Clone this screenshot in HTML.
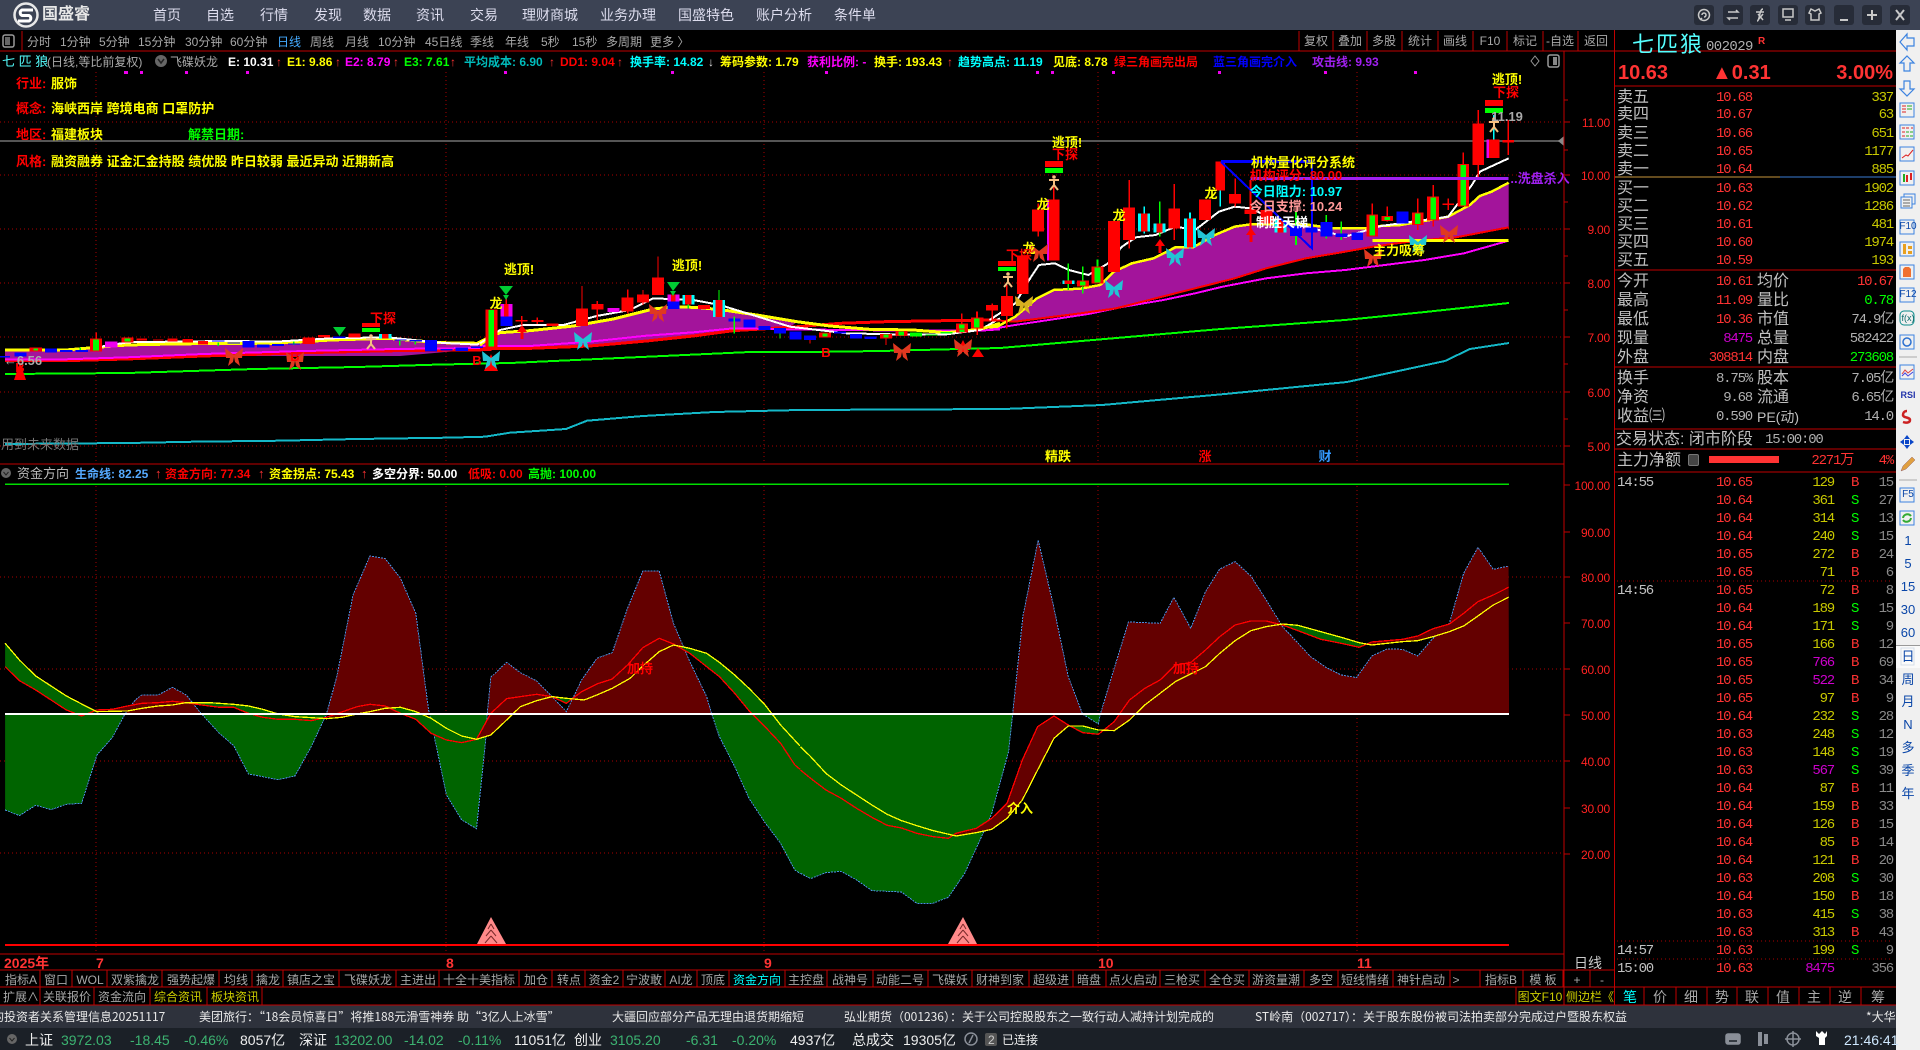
<!DOCTYPE html>
<html lang="zh"><head><meta charset="utf-8"><title>国盛睿</title>
<style>
html,body{margin:0;padding:0;background:#000;width:1920px;height:1050px;overflow:hidden}
body{position:relative;font-family:"Liberation Sans","WenQuanYi Zen Hei","Noto Sans CJK SC",sans-serif;font-size:13px;color:#c0c0c0}
.t{position:absolute;white-space:pre;line-height:16px;margin-top:1px}
.h{font-size:12px}
.b{font-weight:bold}
svg{position:absolute;left:0;top:0}
svg *{vector-effect:non-scaling-stroke}
svg text{font-family:"Liberation Sans","WenQuanYi Zen Hei","Noto Sans CJK SC",sans-serif}
.box{position:absolute}
#nav span{position:absolute;top:7px;font-size:14px;line-height:16px;color:#dde;transform:translateX(-50%);white-space:pre}
#tb span{position:absolute;top:34px;font-size:12px;line-height:16px;color:#a8a8a8;white-space:pre}
#tr span{position:absolute;top:33px;font-size:12px;line-height:16px;color:#a8a8a8;transform:translateX(-50%);white-space:pre}
#info span{position:absolute;top:54px;font-size:12px;line-height:16px;font-weight:bold;white-space:pre}
#ax span{position:absolute;left:1566px;width:44px;margin-top:1px;text-align:right;line-height:14px;font-size:12px;letter-spacing:-.2px;color:#f22}
#tabs span,#tab2 span,#tab3 span{position:absolute;transform:translateX(-50%);line-height:16px;white-space:pre;color:#a8a8a8;font-size:12px}
#tabs span{top:972px}#tab2 span{top:989px}#tab3 span{top:989px;font-size:14px}
#st span{position:absolute;top:1032px;line-height:16px;font-size:14px;white-space:pre;color:#eee}
#st .g{color:#3cb371}
#tk span{position:absolute;top:1009px;line-height:16px;color:#e8e8e8;white-space:pre;font-size:12px;font-family:"WenQuanYi Zen Hei","Noto Sans CJK SC",sans-serif}
.r{position:absolute;left:1617px;width:276px;height:18px;line-height:18px;margin-top:1px;font-family:"Liberation Mono","WenQuanYi Zen Hei",monospace;font-size:14px;letter-spacing:-1.2px;white-space:pre}
.r i,.r b,.r u,.r s,.r em,.r q{position:absolute;top:0;font-style:normal;font-weight:normal;text-decoration:none;quotes:none}
.r i{left:0;color:#c0c0c0;font-size:14px}
.r b{right:141px;color:#f33}
.r u{right:59px;color:#c8c800}
.r u.m{color:#c0c}
.r s{left:234px;color:#f33}
.r s.g{color:#0f0}
.r em{right:0;color:#8a8a8a}
.l{position:absolute;left:1617px;margin-top:1px;line-height:18px;font-size:16px;color:#c0c0c0;white-space:pre}
.l2{position:absolute;left:1757px;margin-top:1px;line-height:18px;font-size:16px;color:#c0c0c0;white-space:pre}
.v{position:absolute;right:168px;margin-top:1px;line-height:18px;font-family:"Liberation Mono",monospace;font-size:14px;letter-spacing:-1.2px;color:#f33;white-space:pre}
.v2{position:absolute;right:27px;margin-top:1px;line-height:18px;font-family:"Liberation Mono","WenQuanYi Zen Hei",monospace;font-size:14px;letter-spacing:-1.2px;color:#c8c800;white-space:pre}
#sb span{position:absolute;left:1896px;width:24px;text-align:center;line-height:16px;color:#0a46a8;font-size:13px}
</style></head><body>

<!-- backgrounds -->
<div class="box" style="left:0;top:0;width:1920px;height:30px;background:#3c4354"></div>
<div class="box" style="left:1896px;top:30px;width:24px;height:1020px;background:#f0f0f0"></div>
<div class="box" style="left:0;top:1005px;width:1896px;height:23px;background:#2e323c"></div>
<div class="box" style="left:0;top:1028px;width:1896px;height:22px;background:#1b2027"></div>
<div class="box" style="left:1896px;top:645px;width:24px;height:23px;background:#fafafa;border-top:1px solid #999;box-sizing:border-box"></div>

<svg width="1920" height="1050" viewBox="0 0 1920 1050" fill="none">
<defs>
<clipPath id="up"><rect x="0" y="480" width="1564" height="234"/></clipPath>
<clipPath id="dn"><rect x="0" y="714" width="1564" height="240"/></clipPath>
<g id="area">
<polygon transform="translate(0,480) scale(.5102,.3333)" points="10,702 10,990 38,1007 70,976 100,989 130,973 160,970 190,825 220,773 245,702 265,660 278,645 310,645 338,622 365,645 395,702 430,760 458,797 487,882 545,899 578,888 610,800 640,702 660,590 692,345 725,228 755,236 785,295 815,400 840,690 842,702 875,945 905,1020 934,1046 952,780 955,702 962,592 993,547 1020,578 1052,603 1082,650 1110,695 1140,600 1170,535 1200,518 1230,385 1260,273 1292,273 1320,430 1352,545 1385,650 1395,702 1410,770 1440,860 1468,955 1498,1025 1530,1090 1558,1170 1568,1180 1568,702"/>
<polygon transform="translate(780,480) scale(.5102,.3333)" points="0,702 0,1090 28,1170 60,1196 90,1178 120,1174 150,1200 180,1232 238,1236 268,1270 300,1270 330,1252 362,1180 398,1060 415,1000 448,815 456,702 476,410 506,180 535,370 565,590 593,702 624,732 628,702 655,565 683,426 745,430 772,352 805,445 834,335 862,267 892,245 923,288 953,360 985,440 1040,530 1070,562 1100,585 1130,593 1160,528 1190,507 1220,508 1250,528 1280,475 1312,430 1340,280 1368,202 1398,268 1428,258 1429,702"/>
</g>
<path id="bf" d="M0 -2L-9 -9L-8 1L-4 1L-6 9L-1 5L0 0L1 5L6 9L4 1L8 1L9 -9Z"/>
<g id="pp"><circle cx="0" cy="-6" r="1.8" fill="#f5c080"/><path d="M-5 -3L5 -3M0 -4L0 2M0 2L-4 7M0 2L4 7" stroke="#f5c080" stroke-width="2"/></g>
<g id="ar"><path d="M0 -7L5 0L1.5 0L1.5 7L-1.5 7L-1.5 0L-5 0Z" fill="#f00"/></g>
</defs>

<!-- grid -->
<g stroke="#a00" stroke-width="1" stroke-dasharray="1 3" shape-rendering="crispEdges">
<path d="M0 122H1564M0 175H1564M0 229H1564M0 283H1564M0 337H1564M0 392H1564M0 446H1564"/>
<path d="M0 577H1564M0 669H1564M0 761H1564M0 853H1564"/>
<path d="M96 72V462M446 72V462M764 72V462M1098 72V462M1357 72V462"/>
<path d="M96 486V952M446 486V952M764 486V952M1098 486V952M1357 486V952"/>
<path d="M1617 581H1893M1617 941H1893M1617 959H1893"/>
</g>
<path d="M0 141H1562" stroke="#555" stroke-width="2" shape-rendering="crispEdges"/>
<polygon points="1558,141 1564,136 1564,146" fill="#888"/>

<!-- pink dots -->
<g fill="#e0e" shape-rendering="crispEdges"><path d="M124 71h4v3h-4zM140 71h3v3h-3zM185 71h3v3h-3zM246 71h3v3h-3zM504 71h3v3h-3zM671 71h3v3h-3zM825 71h3v3h-3zM1036 71h3v3h-3zM1051 71h3v3h-3zM1112 71h3v3h-3zM1218 71h3v3h-3zM1324 71h3v3h-3zM1414 71h3v3h-3z"/></g>

<!-- purple bands -->
<g fill="#a3149b">
<polygon points="5,350 66,350 97,347 128,345 173,344 230,343 275,343 332,340 388,338 439,343 477,343 490,337 500,333 530,331 573,326 613,319 653,309 677,307 700,308 723,310 757,315 797,322 790,327 733,331 693,336 647,341 590,346 530,348 480,349 400,356 204,356 128,359 66,360 5,360"/>
<polygon transform="translate(950,90) scale(.3954,.3333)" points="150,690 165,680 220,625 262,600 330,596 380,585 415,545 460,520 515,505 570,472 615,472 670,435 720,410 760,403 900,403 965,415 1050,415 1090,408 1140,405 1190,395 1260,380 1315,345 1340,318 1370,305 1413,278 1413,412 1280,442 1200,450 1130,460 1070,470 1000,485 900,505 800,535 720,565 620,595 520,625 420,655 330,670 250,682 165,695"/>
</g>

<!-- long MAs -->
<g fill="none" shape-rendering="crispEdges">
<polyline stroke="#0f0" stroke-width="2" points="5,374 127,373 255,369 357,367 434,364.7 510,363 663,356 750,352 813,352 880,351 960,349 1000,348 1221,329 1345,320 1425,312 1509,303"/>
<polyline stroke="#14b8c8" stroke-width="2" points="5,444 128,443 194,441.7 280,440.7 357,439 446,437.7 485,436.7 510,432.7 566,429 587,420.7 643,416 714,412 800,410 1004,409 1102,405 1225,394 1347,382 1445,361 1470,349 1509,343"/>
</g>

<!-- price lines -->
<g fill="none" stroke-linejoin="round" shape-rendering="crispEdges">
<g transform="scale(.5102,.3333) translate(0,750)">
<polyline stroke="#f00" stroke-width="3" points="10,332 130,332 250,327 400,318 600,308 780,302 935,300 963,298"/>
<polyline stroke="#f0f" stroke-width="2" points="10,328 130,328 250,322 400,312 600,303 780,297 935,294 963,291"/>
<polyline stroke="#ff0" stroke-width="3" points="10,300 130,300 190,292 250,285 340,282 450,280 540,280 650,270 760,265 860,278 935,280 965,258"/>
<polyline stroke="#fff" stroke-width="2" points="190,292 250,277 340,275 450,273 540,275 650,265 760,262 860,278 935,284 963,265"/>
</g>
<g transform="translate(480,240) scale(.3333)">
<polyline stroke="#f00" stroke-width="3" points="0,325 150,325 330,318 500,303 640,288 760,272 930,262 1080,250 1220,245 1400,242 1560,240"/>
<polyline stroke="#f0f" stroke-width="2" points="0,318 150,318 330,305 500,287 640,277 760,265 930,268 1100,270 1300,272 1500,272 1560,268"/>
<polyline stroke="#ff0" stroke-width="3" points="0,315 30,290 60,278 150,272 280,258 400,237 520,207 590,200 660,203 730,210 830,225 950,245 1050,258 1170,268 1300,270 1400,278 1500,268 1560,250"/>
<polyline stroke="#fff" stroke-width="2" points="0,310 60,270 130,255 250,255 350,228 450,210 520,175 640,180 720,195 850,235 930,260 1100,280 1240,283 1400,283 1500,270 1560,235"/>
</g>
<g transform="translate(950,90) scale(.3954,.3333)">
<polyline stroke="#f0f" stroke-width="2" points="100,718 165,705 250,690 350,672 440,650 540,630 620,610 690,590 800,565 900,550 1000,540 1100,525 1200,510 1300,490 1413,452"/>
<polyline stroke="#f00" stroke-width="2" points="0,692 126,692 165,695 250,682 330,670 420,655 520,625 620,595 720,565 800,535 900,505 1000,485 1070,470 1130,460 1200,450 1280,442 1413,412"/>
<polyline stroke="#ff0" stroke-width="2.5" points="70,715 120,710 165,680 220,625 262,600 330,596 380,585 415,545 460,520 515,505 570,472 615,472 670,435 720,410 760,403 900,403 965,415 1050,415 1090,408 1140,405 1190,395 1260,380 1315,345 1340,318 1370,305 1413,278"/>
<polyline stroke="#fff" stroke-width="2" points="100,690 165,640 200,570 225,525 265,520 300,540 350,555 400,520 435,470 470,442 520,435 570,410 620,420 680,365 720,350 760,355 830,395 900,410 1000,440 1090,408 1200,390 1260,380 1320,285 1340,245 1413,205"/>
<path stroke="#ff0" stroke-width="3" d="M1068 451H1413"/>
</g>
</g>

<!-- candles G7 -->
<g transform="scale(.5102,.3333) translate(0,750)" shape-rendering="crispEdges">
<path fill="#f00" d="M268 265h20v7h-20zM300 268h20v3h-20zM328 265h20v10h-20zM358 267h20v11h-20zM388 273h20v10h-20zM593 262h24v20h-24zM623 255h24v7h-24zM683 250h24v12h-24zM58 292h24v13h-24zM176 265h24v40h-24zM238 262h24v16h-24zM187 247h3v18h-3z"/>
<path fill="#0f0" d="M66 295h8v7h-8zM182 268h12v34h-12zM244 265h12v10h-12zM426 278h3v10h-3zM574 275h3v10h-3zM782 272h3v15h-3zM812 274h3v10h-3zM156 292h3v8h-3z"/>
<path fill="#00f" d="M0 318h20v4h-20zM28 308h24v12h-24zM88 295h24v13h-24zM118 300h24v6h-24zM148 300h24v6h-24zM416 272h24v3h-24zM446 278h24v2h-24zM475 273h24v20h-24zM504 283h24v10h-24zM533 282h24v6h-24zM564 280h24v3h-24zM653 260h24v4h-24zM773 268h24v4h-24zM803 270h24v4h-24zM833 270h24v35h-24zM863 297h24v5h-24zM893 292h24v11h-24zM923 290h24v4h-24z"/>
<path fill="#e0e" d="M206 275h24v17h-24z"/>
<path fill="#0ff" d="M743 252h24v13h-24z"/>
<path fill="#f00" d="M749 252h12v13h-12z"/>
</g>

<!-- candles G11 -->
<g transform="translate(480,240) scale(.3333)" shape-rendering="crispEdges">
<path fill="#f00" d="M16 208h36v114h-36zM107 240h36v4h-36zM154 240h36v6h-36zM199 250h36v8h-36zM288 205h36v53h-36zM334 192h36v16h-36zM425 172h36v43h-36zM471 163h36v25h-36zM516 112h36v53h-36zM654 195h36v12h-36zM1518 195h36v17h-36zM1017 278h36v14h-36zM1200 282h36v13h-36zM1246 273h36v15h-36zM1428 250h36v28h-36zM1474 233h36v32h-36z"/>
<path fill="#f00" d="M77 165h4v27h-4zM123 228h4v27h-4zM170 233h4v19h-4zM304 138h4v67h-4zM350 183h4v57h-4zM441 148h4v72h-4zM487 150h4v45h-4zM532 50h4v70h-4zM988 300h4v10h-4zM1216 295h4v20h-4zM1444 220h4v60h-4zM1490 215h4v70h-4zM1534 190h4v50h-4z"/>
<path fill="#e0e" d="M61 192h36v38h-36zM562 163h36v22h-36zM382 204h36v12h-36z"/>
<path fill="#f00" d="M72 192h14v38h-14zM573 163h14v44h-14z"/>
<path fill="#00f" d="M61 230h36v28h-36zM562 185h36v22h-36zM745 235h36v10h-36zM790 239h36v23h-36zM835 258h36v12h-36zM882 264h36v16h-36zM928 275h36v23h-36zM972 286h36v14h-36zM1062 275h36v5h-36zM1110 282h36v13h-36zM1154 290h36v7h-36z"/>
<path fill="#0ff" d="M607 165h36v29h-36zM699 180h36v51h-36z"/>
<path fill="#f00" d="M615 165h20v29h-20zM707 180h20v51h-20z"/>
<path fill="#0f0" d="M26 210h16v110h-16zM1027 280h16v10h-16zM1210 284h16v9h-16zM1256 275h16v11h-16zM1438 252h16v24h-16zM1484 235h16v28h-16zM1290 277h36v13h-36zM1336 283h36v4h-36zM1382 276h36v4h-36zM761 230h4v50h-4zM898 280h4v15h-4zM715 150h4v30h-4zM623 194h4v11h-4z"/>
</g>

<!-- candles G8 -->
<g transform="translate(950,90) scale(.3954,.3333)" shape-rendering="crispEdges">
<path fill="#f00" d="M28 670h4v30h-4zM66 665h4v17h-4zM105 640h4v50h-4zM142 585h4v130h-4zM221 340h4v100h-4zM260 285h4v60h-4zM451 270h4v205h-4zM565 282h4v168h-4zM719 265h4v85h-4zM758 270h4v150h-4zM1066 340h4v33h-4zM1104 350h4v45h-4zM1181 325h4v95h-4zM1220 285h4v125h-4zM1258 325h4v35h-4zM1296 187h4v35h-4zM1334 60h4v210h-4zM1410 90h4v105h-4z"/>
<path fill="#0f0" d="M297 520h4v80h-4zM334 530h4v80h-4zM371 508h4v72h-4zM528 335h4v105h-4zM873 365h4v100h-4zM950 375h4v70h-4zM988 395h4v55h-4z"/>
<path fill="#0ff" d="M489 350h4v80h-4zM605 368h4v107h-4zM682 215h4v135h-4zM1373 75h4v73h-4zM476 370h30v55h-30zM515 400h30v28h-30zM592 385h30v87h-30zM821 390h30v38h-30zM285 572h30v10h-30z"/>
<path fill="#f00" d="M92 645h30v15h-30zM129 618h30v60h-30zM169 497h30v115h-30zM208 358h30v67h-30zM247 328h30v184h-30zM400 393h30v153h-30zM438 352h30v98h-30zM552 355h30v60h-30zM630 328h30v62h-30zM672 215h24v87h-24zM706 312h30v28h-30zM745 358h30v14h-30zM785 360h30v40h-30zM1321 100h30v125h-30zM1360 148h30v56h-30zM1397 150h30v8h-30zM290 572h18v10h-18zM1245 340h30v5h-30zM15 700h30v18h-30zM53 682h30v33h-30zM321 572h30v18h-30zM358 530h30v50h-30zM1053 373h30v67h-30zM1091 378h30v15h-30zM1168 368h30v37h-30zM1207 320h30v72h-30zM1283 222h30v128h-30zM483 370h16v55h-16zM522 400h16v28h-16zM599 385h16v87h-16zM828 390h16v38h-16z"/>
<path fill="#e0e" d="M1357 148h6v56h-6zM245 328h5v184h-5z"/>
<path fill="#0f0" d="M23 703h14v12h-14zM61 685h14v27h-14zM329 575h14v12h-14zM366 533h14v44h-14zM1061 376h14v61h-14zM1099 381h14v9h-14zM1176 371h14v31h-14zM1215 323h14v66h-14zM1291 225h14v122h-14z"/>
<path fill="#00f" d="M860 408h30v30h-30zM899 412h30v16h-30zM937 396h30v44h-30zM975 430h30v11h-30zM1015 428h30v22h-30zM1129 365h30v35h-30z"/>
<path fill="none" stroke="#00f" stroke-width="2" d="M685 215H915V475L685 215"/>
<path fill="none" stroke="#00f" stroke-width="3" d="M685 215H915"/>
<path fill="none" stroke="#a020f0" stroke-width="3" d="M760 265H1413"/>
</g>

<!-- markers -->
<g fill="#f00" shape-rendering="crispEdges"><path d="M362 323h18v4h-18zM998 261h18v5h-18zM1045 161h18v6h-18zM1485 100h18v6h-18z"/></g>
<g fill="#0f0" shape-rendering="crispEdges"><path d="M362 328h18v4h-18zM998 267h18v4h-18zM1045 168h18v5h-18zM1485 108h18v5h-18z"/></g>
<g fill="#0c3"><polygon points="333,327 346,327 339.5,336"/><polygon points="499,286 513,286 506,295"/><polygon points="667,282 680,282 673,291"/>
<path d="M503 295h6l-3 5zM670 291h6l-3 5z"/></g>
<g fill="#f00"><polygon points="20,362 26,380 14,380"/><polygon points="491,354 498,371 484,371"/><polygon points="978,348 984,357 972,357"/><polygon points="963,340 969,352 957,352"/></g>
<use href="#ar" x="522" y="332"/><use href="#ar" x="1160" y="246"/><use href="#ar" x="1251" y="235"/>
<use href="#pp" x="371" y="342"/><use href="#pp" x="1008" y="280"/><use href="#pp" x="1054" y="183"/><use href="#pp" x="1494" y="125"/>
<g fill="#22c4d4"><use href="#bf" x="1114" y="289"/><use href="#bf" x="1175" y="257"/><use href="#bf" x="1206" y="237"/><use href="#bf" x="1418" y="244"/><use href="#bf" x="583" y="341"/><use href="#bf" x="491" y="360"/></g>
<g fill="#e03820"><use href="#bf" x="1039" y="253"/><use href="#bf" x="1449" y="234"/><use href="#bf" x="1373" y="258"/><use href="#bf" x="234" y="357"/><use href="#bf" x="295" y="361"/><use href="#bf" x="658" y="313"/><use href="#bf" x="902" y="352"/><use href="#bf" x="963" y="348"/></g>
<use href="#bf" x="1024" y="305" fill="#d8b020"/>

<!-- chart overlay text -->
<g font-size="13" font-weight="bold" text-anchor="middle">
<g fill="#ff0"><text x="519" y="274">逃顶!</text><text x="687" y="270">逃顶!</text><text x="1067" y="147">逃顶!</text><text x="1507" y="84">逃顶!</text>
<text x="1043" y="209">龙</text><text x="1211" y="198">龙</text><text x="1119" y="220">龙</text><text x="1029" y="253">龙</text><text x="496" y="308">龙</text>
<text x="1303" y="167">机构量化评分系统</text><text x="1399" y="255">主力吸筹</text></g>
<g fill="#f00"><text x="383" y="323">下探</text><text x="1065" y="159">下探</text><text x="1506" y="97">下探</text><text x="1019" y="260">下探</text>
<text x="20" y="372">B</text><text x="295" y="361">B</text><text x="477" y="365">B</text><text x="826" y="357">B</text><text x="1296" y="180">机构评分: 80.00</text></g>
<text x="1507" y="121" fill="#aaa">11.19</text>
<text x="1296" y="196" fill="#0ff">今日阻力:  10.97</text>
<text x="1296" y="211" fill="#f99">今日支撑:  10.24</text>
<text x="1282" y="227" fill="#fff">制胜天梯</text>
<text x="1540" y="183" fill="#a020f0">..洗盘杀入</text>
<text x="23" y="365" fill="#aaa">←6.56</text>
<text x="40" y="449" fill="#777" font-weight="normal">用到未来数据</text>
<text x="1058" y="461" fill="#ff0">精跌</text><text x="1205" y="461" fill="#f00">涨</text><text x="1325" y="461" fill="#39f">财</text>
</g>

<!-- lower pane -->
<use href="#area" fill="#640000" clip-path="url(#up)"/>
<use href="#area" fill="#006400" clip-path="url(#dn)"/>
<g fill="none" stroke="#4a90e2" stroke-width="1" stroke-dasharray="2 1" shape-rendering="crispEdges">
<polyline transform="translate(0,480) scale(.5102,.3333)" points="10,990 38,1007 70,976 100,989 130,973 160,970 190,825 220,773 245,702 265,660 278,645 310,645 338,622 365,645 395,702 430,760 458,797 487,882 545,899 578,888 610,800 640,702 660,590 692,345 725,228 755,236 785,295 815,400 840,690 842,702 875,945 905,1020 934,1046 952,780 955,702 962,592 993,547 1020,578 1052,603 1082,650 1110,695 1140,600 1170,535 1200,518 1230,385 1260,273 1292,273 1320,430 1352,545 1385,650 1395,702 1410,770 1440,860 1468,955 1498,1025 1530,1090 1558,1170 1568,1180"/>
<polyline transform="translate(780,480) scale(.5102,.3333)" points="40,1180 60,1196 90,1178 120,1174 150,1200 180,1232 238,1236 268,1270 300,1270 330,1252 362,1180 398,1060 415,1000 448,815 456,702 476,410 506,180 535,370 565,590 593,702 624,732 628,702 655,565 683,426 745,430 772,352 805,445 834,335 862,267 892,245 923,288 953,360 985,440 1040,530 1070,562 1100,585 1130,593 1160,528 1190,507 1220,508 1250,528 1280,475 1312,430 1340,280 1368,202 1398,268 1428,258"/>
</g>
<g transform="translate(0,480) scale(.5102,.3333)">
<g fill="#006400">
<polygon points="10,490 38,540 70,588 100,618 130,648 160,672 190,695 160,708 130,690 100,660 70,630 38,602 10,560"/>
<polygon points="365,668 410,668 458,673 487,678 515,688 545,702 578,710 610,713 640,716 610,722 578,718 545,718 515,712 487,700 458,682 430,682 395,675"/>
<polygon points="755,685 785,682 815,695 845,715 875,745 905,768 934,778 905,788 875,780 845,760 815,718 785,700 755,678"/>
<polygon points="1082,650 1110,655 1120,660 1110,670"/>
<polygon points="1320,495 1352,505 1385,520 1410,547 1440,585 1468,625 1498,672 1530,735 1568,798 1568,868 1558,855 1530,790 1498,738 1468,692 1440,640 1410,590 1385,560 1352,520"/>
</g>
<g fill="#640000">
<polygon points="190,690 220,688 250,678 278,670 310,668 338,664 365,668 338,675 310,678 278,685 250,693 190,695"/>
<polygon points="640,712 670,696 700,680 725,673 755,678 725,695 700,702 670,712"/>
<polygon points="934,778 962,700 993,656 1020,650 1052,643 1082,650 1052,662 1020,680 993,720 962,765"/>
<polygon points="1120,660 1140,635 1170,612 1200,597 1230,555 1260,503 1292,475 1320,495 1292,515 1260,558 1235,595 1200,625 1170,645 1145,660"/>
</g>
</g>
<g transform="translate(780,480) scale(.5102,.3333)">
<g fill="#006400">
<polygon points="0,728 28,780 60,830 90,880 120,915 150,945 180,975 210,1003 238,1022 268,1037 300,1052 345,1068 330,1075 300,1070 268,1060 238,1044 210,1036 180,1012 150,985 120,955 90,930 60,895 28,850 0,795"/>
<polygon points="565,738 593,738 624,750 624,763 593,758"/>
<polygon points="970,430 1015,436 1060,455 1100,472 1135,488 1150,490 1135,502 1100,490 1060,478 1015,452 985,438"/>
</g>
<g fill="#640000">
<polygon points="345,1060 385,1045 415,1015 445,970 475,840 505,740 537,708 565,735 537,775 505,870 475,960 445,1015 415,1048 385,1058 345,1068"/>
<polygon points="630,755 655,725 685,660 715,625 745,600 775,555 805,548 834,510 862,470 892,435 923,423 953,423 970,430 953,440 923,452 892,482 862,520 834,560 805,582 775,605 745,640 715,675 685,720 655,752"/>
<polygon points="1150,490 1190,482 1220,478 1250,468 1280,446 1312,432 1340,400 1368,365 1398,345 1428,322 1428,352 1398,375 1368,408 1340,438 1312,455 1280,470 1250,482 1220,485 1190,490 1160,495"/>
</g>
</g>
<g fill="none" shape-rendering="crispEdges">
<polyline transform="translate(0,480) scale(.5102,.3333)" stroke="#f00" stroke-width="1.3" points="10,560 38,602 70,630 100,660 130,690 160,708 190,690 220,688 250,678 278,670 310,668 338,664 365,668 395,675 430,682 458,682 487,700 515,712 545,718 578,718 610,722 640,712 670,696 700,680 725,673 755,678 785,700 815,718 845,760 875,780 905,788 934,778 962,700 993,656 1020,650 1052,643 1082,650 1110,670 1140,635 1170,612 1200,597 1230,555 1260,503 1292,475 1320,492 1352,520 1385,560 1410,590 1440,640 1468,692 1498,738 1530,790 1558,855 1568,868"/>
<polyline transform="translate(0,480) scale(.5102,.3333)" stroke="#ff0" stroke-width="1.3" points="10,490 38,540 70,588 100,618 130,648 160,672 190,695 250,693 278,685 310,678 338,675 365,668 410,668 458,673 487,678 515,688 545,702 578,710 610,713 640,716 670,712 700,702 725,695 755,685 785,682 815,695 845,715 875,745 905,768 934,778 962,765 993,720 1020,680 1052,662 1082,650 1110,655 1145,660 1170,645 1200,625 1235,595 1260,558 1292,515 1320,495 1352,505 1385,520 1410,547 1440,585 1468,625 1498,672 1530,735 1568,798"/>
<polyline transform="translate(780,480) scale(.5102,.3333)" stroke="#f00" stroke-width="1.3" points="40,870 60,895 90,930 120,955 150,985 180,1012 210,1036 238,1044 268,1060 300,1070 330,1075 345,1060 385,1045 415,1015 445,970 475,840 505,740 537,708 565,735 593,758 624,763 655,725 685,660 715,625 745,600 775,555 805,548 834,510 862,470 892,435 923,423 953,423 985,435 1015,452 1060,478 1100,490 1135,502 1160,486 1190,482 1220,478 1250,468 1280,446 1312,432 1340,400 1368,365 1398,345 1428,322"/>
<polyline transform="translate(780,480) scale(.5102,.3333)" stroke="#ff0" stroke-width="1.3" points="40,800 60,830 90,880 120,915 150,945 180,975 210,1003 238,1022 268,1037 300,1052 345,1068 385,1058 415,1048 445,1015 475,960 505,870 537,775 565,738 593,738 624,750 655,752 685,720 715,675 745,640 775,605 805,582 834,560 862,520 892,482 923,452 953,440 985,432 1015,436 1060,455 1100,472 1135,488 1160,495 1190,490 1220,485 1250,482 1280,470 1312,455 1340,438 1368,408 1398,375 1428,352"/>
</g>
<g shape-rendering="crispEdges">
<path d="M5 484H1509" stroke="#0d0" stroke-width="1.5"/>
<path d="M5 714H1509" stroke="#fff" stroke-width="2"/>
<path d="M5 945H1509" stroke="#f00" stroke-width="2"/>
</g>
<g fill="#ff8a8a"><polygon points="491,917 506,944 477,944"/><polygon points="963,917 977,944 948,944"/></g>
<g fill="none" stroke="#7a2a2a" stroke-width="1"><path d="M491 924l-3 5M491 924l3 5M491 930l-5 6M491 930l5 6M491 936l-6 7M491 936l6 7M963 924l-3 5M963 924l3 5M963 930l-5 6M963 930l5 6M963 936l-6 7M963 936l6 7"/></g>
<g font-size="13" font-weight="bold" text-anchor="middle"><text x="640" y="673" fill="#f00">加持</text><text x="1186" y="673" fill="#f00">加持</text><text x="1020" y="813" fill="#ff0">介入</text></g>

<!-- frame lines -->
<g stroke="#c00000" stroke-width="1" shape-rendering="crispEdges">
<path d="M0 51H1896M0 464H1564M0 954H1564M0 970H1615M0 987H1896M0 1005H1896"/>
<path d="M1564 51V987M1614.5 30V1005M22 31V51"/>
<path d="M1615 86H1896M1615 270H1896M1615 367H1896M1615 429H1896M1615 449H1896M1615 472H1896"/>
<path d="M1299 31V51M1333 31V51M1367 31V51M1402 31V51M1438 31V51M1473 31V51M1507 31V51M1543 31V51M1578 31V51"/>
<path d="M1564 122h6M1564 175h6M1564 229h6M1564 283h6M1564 337h6M1564 392h6M1564 446h6M1564 100h4M1564 150h4M1564 202h4M1564 256h4M1564 310h4M1564 364h4M1564 419h4"/>
<path d="M1564 485h6M1564 532h6M1564 577h6M1564 623h6M1564 669h6M1564 715h6M1564 761h6M1564 808h6M1564 854h6"/>
<path d="M40 970V987M72 970V987M107 970V987M162 970V987M219 970V987M252 970V987M283 970V987M339 970V987M396 970V987M439 970V987M519 970V987M552 970V987M585 970V987M623 970V987M665 970V987M697 970V987M729 970V987M785 970V987M827 970V987M873 970V987M928 970V987M972 970V987M1029 970V987M1073 970V987M1106 970V987M1160 970V987M1205 970V987M1249 970V987M1304 970V987M1338 970V987M1393 970V987M1450 970V987M1480 970V987M1523 970V987M1563 970V987M1590 970V987"/>
<path d="M40 987V1005M94 987V1005M150 987V1005M207 987V1005M262 987V1005M1516 987V1005M1564 987V1005"/>
<path d="M1644 987V1005M1676 987V1005M1707 987V1005M1737 987V1005M1768 987V1005M1799 987V1005M1830 987V1005M1861 987V1005"/>
</g>
<path d="M1615 177H1780" stroke="#c8963c" shape-rendering="crispEdges"/><path d="M1780 177H1896" stroke="#3a7bd5" shape-rendering="crispEdges"/>
<rect x="3" y="35" width="11" height="12" rx="2" fill="none" stroke="#999" stroke-width="1.5"/><rect x="5" y="37" width="5" height="8" fill="#666"/>
<path d="M1535 56l4 5-4 5-4-5z" stroke="#999"/><rect x="1548" y="55" width="11" height="12" rx="2" stroke="#999" stroke-width="1.5"/><rect x="1553" y="57" width="4" height="8" fill="#888"/>
<circle cx="161" cy="61" r="6" fill="#666"/><path d="M158 59l3 4 3-4" stroke="#222" stroke-width="1.5"/>
<circle cx="6" cy="473" r="5" fill="#666"/><path d="M3.5 472l2.5 3 2.5-3" stroke="#222"/>

<!-- logo -->
<circle cx="26" cy="15" r="11.5" stroke="#e8e8e8" stroke-width="2.5"/>
<path d="M33 10H22a3 3 0 0 0 0 5.5h7a3 3 0 0 1 0 5.5H18" stroke="#fff" stroke-width="3"/>

<!-- window buttons -->
<g fill="#272c38"><rect x="1694" y="5" width="20" height="20" rx="3"/><rect x="1723" y="5" width="20" height="20" rx="3"/><rect x="1750" y="5" width="20" height="20" rx="3"/><rect x="1778" y="5" width="20" height="20" rx="3"/><rect x="1805" y="5" width="20" height="20" rx="3"/><rect x="1834" y="5" width="20" height="20" rx="3"/><rect x="1862" y="5" width="20" height="20" rx="3"/><rect x="1890" y="5" width="20" height="20" rx="3"/></g>
<g stroke="#c8c8c8" stroke-width="1.5" fill="none">
<circle cx="1704" cy="15" r="5.5"/><path d="M1702 15a2 2 0 1 1 2 2M1700 20l2-2"/>
<path d="M1728 12h10l-2-2M1738 18h-10l2 2"/>
<path d="M1757 21c3 0 2-12 6-12M1756 12h8M1758 14l5 6M1763 14l-5 6"/>
<rect x="1783" y="9" width="10" height="8"/><path d="M1785 20h6"/>
<path d="M1811 9l4 2 4-2 2 4-2 1v6h-8v-6l-2-1z"/>
<path d="M1840 20h8" stroke-width="2"/>
<path d="M1872 10v10M1867 15h10" stroke-width="2"/>
<path d="M1896 10l8 10M1904 10l-8 10" stroke-width="2"/>
</g>

<!-- status icons -->
<g stroke="#8a8f98" fill="none" stroke-width="1.5">
<circle cx="971" cy="1039" r="6"/><path d="M969 1043l4-8"/>
<rect x="985" y="1033" width="12" height="13" rx="2" fill="#555" stroke="none"/>
<rect x="1726" y="1034" width="14" height="10" rx="2" fill="#8a8f98"/><path d="M1729 1041h8" stroke="#1b2027"/>
<path d="M1760 1032v14M1766 1034v10" stroke-width="4"/>
<circle cx="1793" cy="1039" r="6"/><path d="M1793 1031v16M1785 1039h16"/>
</g>
<path d="M1816 1031l3 3 3-3 3 3 2-3v5l-2 2v7h-6v-7l-3-2z" fill="#fff"/>
<circle cx="12" cy="1039" r="5" fill="#666"/><path d="M9.5 1038l2.5 3 2.5-3" stroke="#222"/>

<!-- sidebar icons -->
<g stroke="#3b82e0" stroke-width="1" fill="none" shape-rendering="crispEdges">
<path d="M1914 38H1907V34L1900 42L1907 50V46H1914Z" stroke-width="1.2" shape-rendering="auto"/>
<path d="M1904 71V63H1900L1907 56L1914 63H1910V71Z" stroke-width="1.2" shape-rendering="auto"/>
<path d="M1904 81V89H1900L1907 96L1914 89H1910V81Z" stroke-width="1.2" shape-rendering="auto"/>
<rect x="1900" y="103" width="14" height="14"/><rect x="1900" y="125" width="14" height="14"/><rect x="1900" y="147" width="14" height="14"/><rect x="1900" y="171" width="14" height="14"/>
<rect x="1901" y="197" width="11" height="11"/><path d="M1904 197v-3h11v10h-3"/>
<rect x="1900" y="220" width="14" height="14"/><rect x="1900" y="242" width="14" height="14"/><rect x="1900" y="265" width="14" height="14"/><rect x="1900" y="288" width="14" height="14"/><rect x="1900" y="335" width="14" height="14"/><rect x="1900" y="365" width="14" height="14"/><rect x="1900" y="488" width="14" height="14"/><rect x="1900" y="511" width="14" height="14"/>
<rect x="1901" y="648" width="13" height="17" stroke="#d5dde8"/>
</g>
<rect x="1900" y="311" width="14" height="14" rx="4" fill="none" stroke="#0a8a8a"/>
<g stroke="#d22" stroke-width="1" shape-rendering="crispEdges"><path d="M1902 106h4M1902 109h4M1902 112h4M1902 128h3M1902 132h3M1902 136h3M1906 128h3M1911 128h2"/></g>
<g stroke="#2a2" stroke-width="1" shape-rendering="crispEdges"><path d="M1907 106h5M1907 109h5M1906 132h3M1906 136h3M1910 132h3M1910 136h3"/></g>
<polyline points="1902,158 1906,155 1908,156 1913,150" stroke="#d22" fill="none"/>
<g shape-rendering="crispEdges"><path d="M1903 174h2v8h-2z" fill="#2a2"/><path d="M1906 175h2v7h-2z" fill="#d22"/><path d="M1910 173h2v7h-2z" fill="#d22"/></g>
<g stroke="#666" shape-rendering="crispEdges"><path d="M1903 200h7M1903 203h7M1903 206h7"/></g>
<g fill="#e8a020" shape-rendering="crispEdges"><path d="M1903 244h3v10h-3zM1908 246h4v3h-4zM1908 251h4v3h-4z"/></g>
<path d="M1905 267h4l2 2v8h-8v-8z" fill="#f07030"/>
<circle cx="1907" cy="342" r="4" fill="none" stroke="#2a6fd0" stroke-width="1.5"/>
<polyline points="1902,374 1905,370 1908,373 1913,369" stroke="#d44" fill="none"/><polyline points="1902,376 1905,373 1908,376 1913,372" stroke="#44d" fill="none"/>
<path d="M1907 411c-3 0-4 2-4 4 0 3 7 2 7 5s-4 3-7 2" stroke="#c22" stroke-width="2.5" fill="none"/>
<g fill="#0a46c8"><polygon points="1907,435 1910,439 1904,439"/><polygon points="1907,449 1910,445 1904,445"/><polygon points="1900,442 1904,439 1904,445"/><polygon points="1914,442 1910,439 1910,445"/><rect x="1905" y="440" width="4" height="4"/></g>
<path d="M1901 471l2-5 9-9 3 3-9 9z" fill="#e0a040" stroke="#966" stroke-width=".5"/>
<path d="M1903 518a4.5 4.5 0 0 1 8-2M1911 518a4.5 4.5 0 0 1-8 2" stroke="#3a3" stroke-width="2"/>
<path d="M1899 357H1917M1899 480H1917" stroke="#aaa" shape-rendering="crispEdges"/>
</svg>

<!-- title / nav -->
<div class="t b" style="left:42px;top:6px;font-size:16px;color:#e8e8e8">国盛睿</div>
<div id="nav">
<span style="left:167px">首页</span><span style="left:220px">自选</span><span style="left:274px">行情</span><span style="left:328px">发现</span><span style="left:377px">数据</span><span style="left:430px">资讯</span><span style="left:484px">交易</span><span style="left:550px">理财商城</span><span style="left:628px">业务办理</span><span style="left:706px">国盛特色</span><span style="left:784px">账户分析</span><span style="left:855px">条件单</span>
</div>

<div id="tb">
<span style="left:27px">分时</span><span style="left:60px">1分钟</span><span style="left:99px">5分钟</span><span style="left:138px">15分钟</span><span style="left:185px">30分钟</span><span style="left:230px">60分钟</span><span style="left:277px;color:#4af">日线</span><span style="left:310px">周线</span><span style="left:345px">月线</span><span style="left:378px">10分钟</span><span style="left:425px">45日线</span><span style="left:470px">季线</span><span style="left:505px">年线</span><span style="left:541px">5秒</span><span style="left:572px">15秒</span><span style="left:606px">多周期</span><span style="left:650px">更多 〉</span>
</div>
<div id="tr">
<span style="left:1316px">复权</span><span style="left:1350px">叠加</span><span style="left:1384px">多股</span><span style="left:1420px">统计</span><span style="left:1455px">画线</span><span style="left:1490px">F10</span><span style="left:1525px">标记</span><span style="left:1560px">-自选</span><span style="left:1596px">返回</span>
</div>

<div id="info">
<span style="left:2px;color:#5ff;font-weight:normal;font-size:13px">七 匹 狼</span><span style="left:47px;color:#aaa;font-weight:normal">(日线,等比前复权)</span>
<span style="left:170px;color:#aaa;font-weight:normal">飞碟妖龙</span>
<span style="left:228px;color:#fff">E: 10.31</span><span style="left:276px;color:#f33">↑</span>
<span style="left:287px;color:#ff0">E1: 9.86</span><span style="left:335px;color:#f33">↑</span>
<span style="left:345px;color:#f0f">E2: 8.79</span><span style="left:393px;color:#f33">↑</span>
<span style="left:404px;color:#0f0">E3: 7.61</span><span style="left:450px;color:#f33">↑</span>
<span style="left:464px;color:#0bb">平均成本: 6.90</span><span style="left:549px;color:#f33">↑</span>
<span style="left:560px;color:#f00">DD1: 9.04</span><span style="left:617px;color:#f33">↑</span>
<span style="left:630px;color:#0ff">换手率: 14.82</span><span style="left:708px;color:#ddd">↓</span>
<span style="left:720px;color:#ff0">筹码参数: 1.79</span>
<span style="left:807px;color:#f0f">获利比例: -</span>
<span style="left:874px;color:#ff0">换手: 193.43</span><span style="left:947px;color:#f33">↑</span>
<span style="left:958px;color:#0ff">趋势高点: 11.19</span>
<span style="left:1053px;color:#ff0">见底: 8.78</span>
<span style="left:1114px;color:#f00">绿三角画完出局</span>
<span style="left:1213px;color:#00f">蓝三角画完介入</span>
<span style="left:1312px;color:#a020f0">攻击线: 9.93</span>
</div>

<!-- left info block -->
<div class="t b" style="left:16px;top:75px;color:#f00">行业:</div><div class="t b" style="left:51px;top:75px;color:#ff0">服饰</div>
<div class="t b" style="left:16px;top:100px;color:#f00">概念:</div><div class="t b" style="left:51px;top:100px;color:#ff0">海峡西岸 跨境电商 口罩防护</div>
<div class="t b" style="left:16px;top:126px;color:#f00">地区:</div><div class="t b" style="left:51px;top:126px;color:#ff0">福建板块</div><div class="t b" style="left:188px;top:126px;color:#0f0">解禁日期:</div>
<div class="t b" style="left:16px;top:153px;color:#f00">风格:</div><div class="t b" style="left:51px;top:153px;color:#ff0">融资融券 证金汇金持股 绩优股 昨日较弱 最近异动 近期新高</div>

<!-- lower header -->
<div class="t" style="left:17px;top:465px;color:#bbb">资金方向</div>
<div class="t b h" style="left:75px;top:465px;color:#5af">生命线: 82.25</div><div class="t b" style="left:155px;top:465px;color:#f33">↑</div>
<div class="t b h" style="left:165px;top:465px;color:#f00">资金方向: 77.34</div><div class="t b" style="left:258px;top:465px;color:#f33">↑</div>
<div class="t b h" style="left:269px;top:465px;color:#ff0">资金拐点: 75.43</div><div class="t b" style="left:361px;top:465px;color:#f33">↑</div>
<div class="t b h" style="left:372px;top:465px;color:#fff">多空分界: 50.00</div>
<div class="t b h" style="left:468px;top:465px;color:#f00">低吸: 0.00</div>
<div class="t b h" style="left:528px;top:465px;color:#0f0">高抛: 100.00</div>

<!-- axis -->
<div id="ax">
<span style="top:115px">11.00</span><span style="top:168px">10.00</span><span style="top:222px">9.00</span><span style="top:276px">8.00</span><span style="top:330px">7.00</span><span style="top:385px">6.00</span><span style="top:439px">5.00</span>
<span style="top:478px">100.00</span><span style="top:525px">90.00</span><span style="top:570px">80.00</span><span style="top:616px">70.00</span><span style="top:662px">60.00</span><span style="top:708px">50.00</span><span style="top:754px">40.00</span><span style="top:801px">30.00</span><span style="top:847px">20.00</span>
</div>

<!-- date row -->
<div class="t b" style="left:4px;top:954px;color:#f33;font-size:14px">2025年</div>
<div class="t b" style="left:96px;top:954px;color:#f33;font-size:14px">7</div>
<div class="t b" style="left:446px;top:954px;color:#f33;font-size:14px">8</div>
<div class="t b" style="left:764px;top:954px;color:#f33;font-size:14px">9</div>
<div class="t b" style="left:1098px;top:954px;color:#f33;font-size:14px">10</div>
<div class="t b" style="left:1357px;top:954px;color:#f33;font-size:14px">11</div>
<div class="t" style="left:1574px;top:954px;color:#ccc;font-size:14px">日线</div>

<!-- tabs -->
<div id="tabs">
<span style="left:21px">指标A</span><span style="left:56px">窗口</span><span style="left:90px">WOL</span><span style="left:135px">双紫擒龙</span><span style="left:191px">强势起爆</span><span style="left:236px">均线</span><span style="left:268px">擒龙</span><span style="left:311px">镇店之宝</span><span style="left:368px">飞碟妖龙</span><span style="left:418px">主进出</span><span style="left:479px">十全十美指标</span><span style="left:536px">加仓</span><span style="left:569px">转点</span><span style="left:604px">资金2</span><span style="left:644px">宁波敢</span><span style="left:681px">AI龙</span><span style="left:713px">顶底</span><span style="left:757px;color:#0ff">资金方向</span><span style="left:806px">主控盘</span><span style="left:850px">战神号</span><span style="left:900px">动能二号</span><span style="left:950px">飞碟妖</span><span style="left:1000px">财神到家</span><span style="left:1051px">超级进</span><span style="left:1089px">暗盘</span><span style="left:1133px">点火启动</span><span style="left:1182px">三枪买</span><span style="left:1227px">全仓买</span><span style="left:1276px">游资量潮</span><span style="left:1321px">多空</span><span style="left:1365px">短线情绪</span><span style="left:1421px">神针启动</span><span style="left:1456px">&gt;</span><span style="left:1501px">指标B</span><span style="left:1543px">模 板</span><span style="left:1577px">+</span><span style="left:1602px">-</span>
</div>
<div id="tab2">
<span style="left:21px">扩展∧</span><span style="left:67px">关联报价</span><span style="left:122px">资金流向</span><span style="left:178px;color:#cc0">综合资讯</span><span style="left:235px;color:#cc0">板块资讯</span>
<span style="left:1540px;color:#cc0">图文F10</span><span style="left:1590px;color:#cc0">侧边栏《</span>
</div>
<div id="tab3">
<span style="left:1630px;color:#0ff">笔</span><span style="left:1660px">价</span><span style="left:1691px">细</span><span style="left:1722px">势</span><span style="left:1752px">联</span><span style="left:1783px">值</span><span style="left:1814px">主</span><span style="left:1845px">逆</span><span style="left:1878px">筹</span>
</div>

<!-- ticker -->
<div id="tk">
<span style="left:-8px">的投资者关系管理信息20251117</span><span style="left:199px">美团旅行：“18会员惊喜日”将推188元滑雪神券 助“3亿人上冰雪”</span><span style="left:612px">大疆回应部分产品无理由退货期缩短</span><span style="left:844px">弘业期货（001236）：关于公司控股股东之一致行动人减持计划完成的</span><span style="left:1255px">ST岭南（002717）：关于股东股份被司法拍卖部分完成过户暨股东权益</span><span style="left:1866px">*大华</span>
</div>

<!-- status -->
<div id="st">
<span style="left:25px">上证</span><span class="g" style="left:61px">3972.03</span><span class="g" style="left:130px">-18.45</span><span class="g" style="left:184px">-0.46%</span><span style="left:240px">8057亿</span>
<span style="left:299px">深证</span><span class="g" style="left:334px">13202.00</span><span class="g" style="left:404px">-14.02</span><span class="g" style="left:458px">-0.11%</span><span style="left:514px">11051亿</span>
<span style="left:574px">创业</span><span class="g" style="left:610px">3105.20</span><span class="g" style="left:686px">-6.31</span><span class="g" style="left:732px">-0.20%</span><span style="left:790px">4937亿</span>
<span style="left:852px">总成交</span><span style="left:903px">19305亿</span>
<span style="left:988px;font-size:12px;color:#ccc">2</span><span style="left:1002px;font-size:12px">已连接</span>
<span style="left:1844px;color:#cfe8ff">21:46:41</span>
</div>

<!-- right panel header -->
<div class="t" style="left:1632px;top:32px;font-size:22px;line-height:24px;color:#5ff;letter-spacing:2px">七匹狼</div>
<div class="t" style="left:1706px;top:38px;font-size:14px;color:#b0b0b0;font-family:'Liberation Mono',monospace;letter-spacing:-.6px">002029</div>
<div class="t b" style="left:1758px;top:33px;font-size:10px;color:#f33">R</div>
<div class="t b" style="left:1618px;top:60px;font-size:20px;line-height:24px;color:#f33">10.63</div>
<div class="t b" style="left:1712px;top:60px;font-size:20px;line-height:24px;color:#f33">▲0.31</div>
<div class="t b" style="right:27px;top:60px;font-size:20px;line-height:24px;color:#f33">3.00%</div>

<!-- order book -->
<div class="l" style="top:88px">卖五</div><div class="v" style="top:88px">10.68</div><div class="v2" style="top:88px">337</div>
<div class="l" style="top:105px">卖四</div><div class="v" style="top:105px">10.67</div><div class="v2" style="top:105px">63</div>
<div class="l" style="top:124px">卖三</div><div class="v" style="top:124px">10.66</div><div class="v2" style="top:124px">651</div>
<div class="l" style="top:142px">卖二</div><div class="v" style="top:142px">10.65</div><div class="v2" style="top:142px">1177</div>
<div class="l" style="top:160px">卖一</div><div class="v" style="top:160px">10.64</div><div class="v2" style="top:160px">885</div>
<div class="l" style="top:179px">买一</div><div class="v" style="top:179px">10.63</div><div class="v2" style="top:179px">1902</div>
<div class="l" style="top:197px">买二</div><div class="v" style="top:197px">10.62</div><div class="v2" style="top:197px">1286</div>
<div class="l" style="top:215px">买三</div><div class="v" style="top:215px">10.61</div><div class="v2" style="top:215px">481</div>
<div class="l" style="top:233px">买四</div><div class="v" style="top:233px">10.60</div><div class="v2" style="top:233px">1974</div>
<div class="l" style="top:251px">买五</div><div class="v" style="top:251px">10.59</div><div class="v2" style="top:251px">193</div>

<div class="l" style="top:272px">今开</div><div class="v" style="top:272px">10.61</div><div class="l2" style="top:272px">均价</div><div class="v2" style="top:272px;color:#f33">10.67</div>
<div class="l" style="top:291px">最高</div><div class="v" style="top:291px">11.09</div><div class="l2" style="top:291px">量比</div><div class="v2" style="top:291px;color:#0f0">0.78</div>
<div class="l" style="top:310px">最低</div><div class="v" style="top:310px">10.36</div><div class="l2" style="top:310px">市值</div><div class="v2" style="top:310px;color:#b0b0b0">74.9亿</div>
<div class="l" style="top:329px">现量</div><div class="v" style="top:329px;color:#c0c">8475</div><div class="l2" style="top:329px">总量</div><div class="v2" style="top:329px;color:#b0b0b0">582422</div>
<div class="l" style="top:348px">外盘</div><div class="v" style="top:348px">308814</div><div class="l2" style="top:348px">内盘</div><div class="v2" style="top:348px;color:#0f0">273608</div>

<div class="l" style="top:369px">换手</div><div class="v" style="top:369px;color:#b0b0b0">8.75%</div><div class="l2" style="top:369px">股本</div><div class="v2" style="top:369px;color:#b0b0b0">7.05亿</div>
<div class="l" style="top:388px">净资</div><div class="v" style="top:388px;color:#b0b0b0">9.68</div><div class="l2" style="top:388px">流通</div><div class="v2" style="top:388px;color:#b0b0b0">6.65亿</div>
<div class="l" style="top:407px">收益㈢</div><div class="v" style="top:407px;color:#b0b0b0">0.590</div><div class="l2" style="top:407px;font-size:14px">PE(动)</div><div class="v2" style="top:407px;color:#b0b0b0">14.0</div>

<div class="l" style="left:1616px;top:430px">交易状态: 闭市阶段</div><div class="v" style="left:1765px;right:auto;top:430px;color:#b0b0b0">15:00:00</div>
<div class="l" style="top:451px">主力净额</div>
<div class="box" style="left:1688px;top:454px;width:11px;height:12px;border:1px solid #777;box-sizing:border-box;background:#444;border-radius:2px"></div>
<div class="box" style="left:1709px;top:456px;width:70px;height:7px;background:#f33"></div>
<div class="v2" style="top:451px;right:67px;color:#f33">2271万</div><div class="v2" style="top:451px;color:#f33">4%</div>

<!-- ticks -->
<div id="ticks">
<div class="r" style="top:473px"><i>14:55</i><b>10.65</b><u>129</u><s>B</s><em>15</em></div>
<div class="r" style="top:491px"><b>10.64</b><u>361</u><s class="g">S</s><em>27</em></div>
<div class="r" style="top:509px"><b>10.64</b><u>314</u><s class="g">S</s><em>13</em></div>
<div class="r" style="top:527px"><b>10.64</b><u>240</u><s class="g">S</s><em>15</em></div>
<div class="r" style="top:545px"><b>10.65</b><u>272</u><s>B</s><em>24</em></div>
<div class="r" style="top:563px"><b>10.65</b><u>71</u><s>B</s><em>6</em></div>
<div class="r" style="top:581px"><i>14:56</i><b>10.65</b><u>72</u><s>B</s><em>8</em></div>
<div class="r" style="top:599px"><b>10.64</b><u>189</u><s class="g">S</s><em>15</em></div>
<div class="r" style="top:617px"><b>10.64</b><u>171</u><s class="g">S</s><em>9</em></div>
<div class="r" style="top:635px"><b>10.65</b><u>166</u><s>B</s><em>12</em></div>
<div class="r" style="top:653px"><b>10.65</b><u class="m">766</u><s>B</s><em>69</em></div>
<div class="r" style="top:671px"><b>10.65</b><u class="m">522</u><s>B</s><em>34</em></div>
<div class="r" style="top:689px"><b>10.65</b><u>97</u><s>B</s><em>9</em></div>
<div class="r" style="top:707px"><b>10.64</b><u>232</u><s class="g">S</s><em>28</em></div>
<div class="r" style="top:725px"><b>10.63</b><u>248</u><s class="g">S</s><em>12</em></div>
<div class="r" style="top:743px"><b>10.63</b><u>148</u><s class="g">S</s><em>19</em></div>
<div class="r" style="top:761px"><b>10.63</b><u class="m">567</u><s class="g">S</s><em>39</em></div>
<div class="r" style="top:779px"><b>10.64</b><u>87</u><s>B</s><em>11</em></div>
<div class="r" style="top:797px"><b>10.64</b><u>159</u><s>B</s><em>33</em></div>
<div class="r" style="top:815px"><b>10.64</b><u>126</u><s>B</s><em>15</em></div>
<div class="r" style="top:833px"><b>10.64</b><u>85</u><s>B</s><em>14</em></div>
<div class="r" style="top:851px"><b>10.64</b><u>121</u><s>B</s><em>20</em></div>
<div class="r" style="top:869px"><b>10.63</b><u>208</u><s class="g">S</s><em>30</em></div>
<div class="r" style="top:887px"><b>10.64</b><u>150</u><s>B</s><em>18</em></div>
<div class="r" style="top:905px"><b>10.63</b><u>415</u><s class="g">S</s><em>38</em></div>
<div class="r" style="top:923px"><b>10.63</b><u>313</u><s>B</s><em>43</em></div>
<div class="r" style="top:941px"><i>14:57</i><b>10.63</b><u>199</u><s class="g">S</s><em>9</em></div>
<div class="r" style="top:959px"><i>15:00</i><b>10.63</b><u class="m">8475</u><em>356</em></div>
</div>

<!-- sidebar text -->
<div id="sb">
<span style="top:533px">1</span><span style="top:556px">5</span><span style="top:579px">15</span><span style="top:602px">30</span><span style="top:625px">60</span><span style="top:649px">日</span><span style="top:672px">周</span><span style="top:694px">月</span><span style="top:717px">N</span><span style="top:740px">多</span><span style="top:763px">季</span><span style="top:786px">年</span>
<span style="top:219px;font-size:10px">F10</span><span style="top:287px;font-size:10px">F12</span><span style="top:310px;font-size:9px;color:#0a6a6a">f(x)</span><span style="top:387px;font-size:9px;font-weight:bold;color:#2233aa">RSI</span><span style="top:487px;font-size:10px">F5</span>
</div>

</body></html>
